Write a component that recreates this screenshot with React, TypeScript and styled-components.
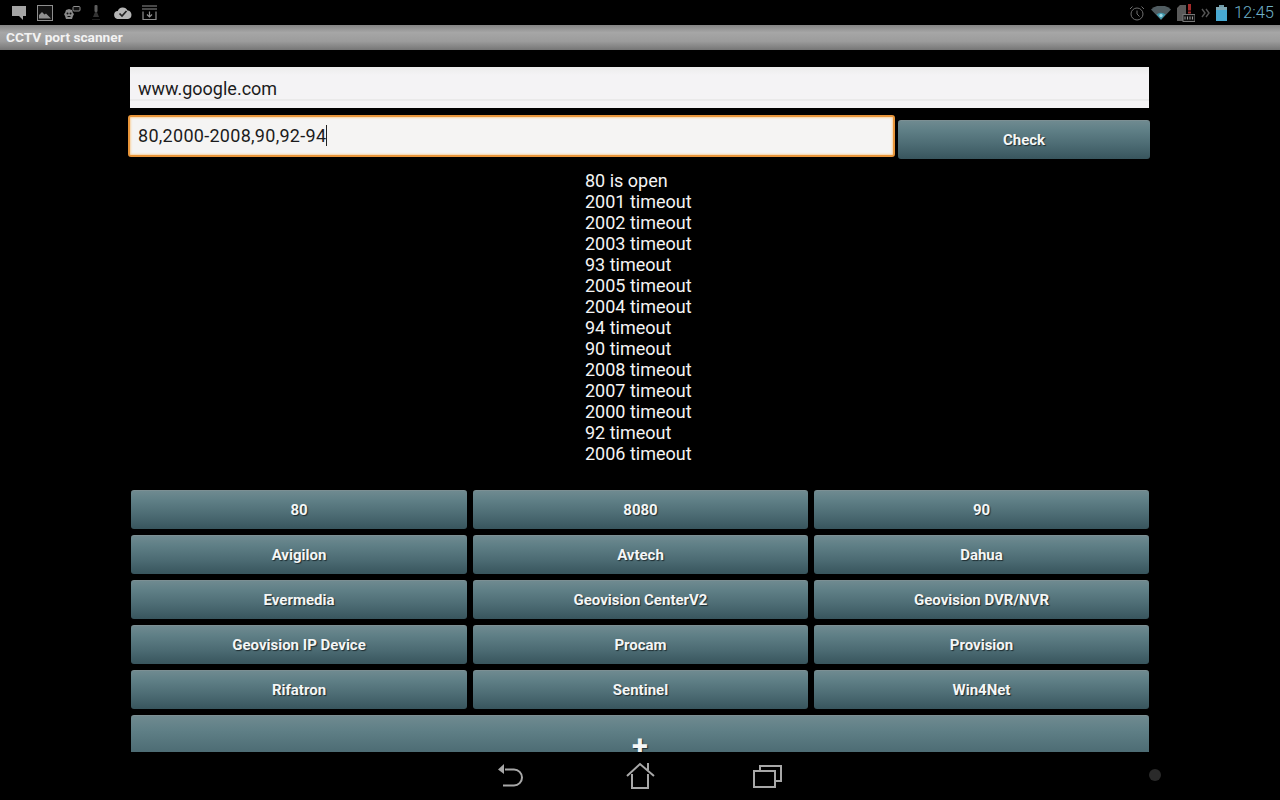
import React from "react";
import styled, { createGlobalStyle } from "styled-components";

const Global = createGlobalStyle`
  html, body { margin: 0; padding: 0; background: #000; }
  #root { width: 1280px; height: 800px; overflow: hidden; }
`;

const Screen = styled.div`
  width: 1280px;
  height: 800px;
  background: #000;
  display: flex;
  flex-direction: column;
  font-family: Roboto, "Liberation Sans", sans-serif;
  overflow: hidden;
`;

const StatusBar = styled.div`
  height: 25px;
  flex: none;
  display: flex;
  align-items: center;
  justify-content: space-between;
  padding: 0 6px 0 12px;
`;

const IconGroup = styled.div<{ $gap: number }>`
  display: flex;
  align-items: center;
  gap: ${(p) => p.$gap}px;
`;

const Clock = styled.span`
  font-size: 16.5px;
  font-weight: 300;
  color: #6fb0c8;
  margin-left: 1px;
`;

const TitleBar = styled.div`
  height: 25px;
  flex: none;
  background: linear-gradient(#858585, #a6a6a6 30%, #9c9c9c 65%, #767676);
  color: #f2f2f2;
  font-size: 13.7px;
  font-weight: 700;
  line-height: 25px;
  padding-left: 6px;
`;

const Content = styled.div`
  flex: 1;
  min-height: 0;
  overflow: hidden;
  padding: 17px 130px 0 130px;
  display: flex;
  flex-direction: column;
`;

const Field = styled.div`
  height: 41px;
  flex: none;
  box-sizing: border-box;
  background: linear-gradient(#ececec, #f4f3f5 20%, #f4f3f5 78%, #e4e4e4 80%, #f4f3f5 84%);
  color: #1c1c1c;
  font-size: 18px;
  line-height: 44px;
  padding-left: 8px;
  width: 1019px;
`;

const CheckRow = styled.div`
  display: flex;
  margin-top: 7px;
  margin-left: -2px;
  align-items: flex-start;
`;

const FocusField = styled.div`
  width: 767px;
  height: 42px;
  flex: none;
  box-sizing: border-box;
  background: #f5f4f3;
  border: 2px solid #e8953a;
  border-radius: 3px;
  box-shadow: inset 0 0 2px 1px #f8d4a5;
  color: #1c1c1c;
  font-size: 18px;
  letter-spacing: 0.28px;
  padding: 0 0 1px 8px;
  display: flex;
  align-items: center;
`;

const Caret = styled.span`
  width: 1px;
  height: 21px;
  background: #222;
`;

const Button = styled.div`
  box-sizing: border-box;
  height: 39px;
  flex: none;
  border-radius: 3px;
  background: linear-gradient(#6f8a90, #5f7f86 25%, #4b6a72 65%, #38555d);
  border-top: 1px solid #7c8f93;
  color: #f4f6f6;
  font-size: 15px;
  font-weight: 700;
  text-shadow: 1px 1px 1px #1e2c30;
  display: flex;
  align-items: center;
  justify-content: center;
`;

const CheckButton = styled(Button)`
  width: 252px;
  margin: 5px 0 0 3px;
`;

const Results = styled.div`
  margin: 11px 0 0 455px;
  color: #f4f4f4;
  font-size: 18px;
  line-height: 21px;
  height: 320px;
  flex: none;
`;

const Grid = styled.div`
  display: grid;
  grid-template-columns: 336px 335px 335px;
  gap: 6px;
  margin-left: 1px;
  width: 1018px;
`;

const Wide = styled(Button)`
  grid-column: 1 / -1;
  height: 60px;
  align-items: flex-start;
  font-size: 29px;
  line-height: 34px;
  padding-top: 13px;
`;

const NavBar = styled.div`
  height: 48px;
  flex: none;
  background: #000;
  position: relative;
  display: flex;
  align-items: center;
  justify-content: center;
  gap: 98px;
`;

const Dot = styled.span`
  position: absolute;
  left: 1149px;
  top: 17px;
  width: 12px;
  height: 12px;
  border-radius: 50%;
  background: #2a2a2a;
`;

const results = ["80 is open", "2001 timeout", "2002 timeout", "2003 timeout", "93 timeout", "2005 timeout", "2004 timeout", "94 timeout", "90 timeout", "2008 timeout", "2007 timeout", "2000 timeout", "92 timeout", "2006 timeout"];
const buttons = ["80", "8080", "90", "Avigilon", "Avtech", "Dahua", "Evermedia", "Geovision CenterV2", "Geovision DVR/NVR", "Geovision IP Device", "Procam", "Provision", "Rifatron", "Sentinel", "Win4Net"];

export default function App() {
  return (
    <Screen>
      <Global />
      <StatusBar>
        <IconGroup $gap={10}>
          <svg width="15" height="16" viewBox="0 0 15 16"><path d="M0 1h14v10h-3v4l-4-4H0z" fill="#a4a4a4" /></svg>
          <svg width="16" height="16" viewBox="0 0 16 16"><rect x=".5" y=".5" width="15" height="15" fill="#111" stroke="#8f8f8f" /><path d="M2 13.500V10l3-3 2.500 2.500L9 8.500l2 2 3 3z" fill="#8f8f8f" /></svg>
          <svg width="18" height="15" viewBox="0 0 18 15"><path d="M1 9l1-1 1-3 3-1 3 1 1 3 1 1-1 2-1 3H3l-1-3z" fill="#8a8a8a" /><circle cx="4.500" cy="8.500" r="1" fill="#111" /><circle cx="7.500" cy="8.500" r="1" fill="#111" /><path d="M4.500 11.500h3" stroke="#111" /><rect x="10" y="1.500" width="7" height="4.500" rx="1" fill="#111" stroke="#8f8f8f" /></svg>
          <svg width="13" height="16" viewBox="0 0 13 16"><rect x="3.500" y="0" width="3" height="7" rx="1" fill="#5e5e5e" /><path d="M2 12l2-5h2l2 5z" fill="#333" /><rect x="1" y="14" width="8" height="1" fill="#1e1e1e" /></svg>
          <svg width="18" height="13" viewBox="0 0 18 13"><path d="M4.500 13a4 4 0 0 1-.7-8A5.200 5.200 0 0 1 13.500 4.500 4.300 4.300 0 0 1 14 13z" fill="#b5b5b5" /><path d="M5.500 7.500L8 10l4.500-5" fill="none" stroke="#222" strokeWidth="1.700" /></svg>
          <svg width="15" height="15" viewBox="0 0 15 15" fill="none" stroke="#8f8f8f" strokeWidth="1.200"><path d="M0 1h15M0 4h15M1 6.500v8h13v-8" /><path d="M7.500 6.500v5M5 9.500l2.500 2.500L10 9.500" /></svg>
        </IconGroup>
        <IconGroup $gap={6}>
          <svg width="16" height="16" viewBox="0 0 16 16" fill="none" stroke="#6e6e6e"><circle cx="8" cy="9" r="6" /><path d="M8 5.500V9l2.500 2.500M1 4l2.500-2.500M15 4l-2.500-2.500" /></svg>
          <svg width="20" height="14" viewBox="0 0 20 14"><path d="M0 3.500a14.500 14.500 0 0 1 20 0L10 14z" fill="#505c61" /><path d="M5.500 8.500a6.500 6.500 0 0 1 9 0L10 13.500z" fill="#3f98ad" /><circle cx="10" cy="9.500" r="1.700" fill="#9fd5e0" /></svg>
          <svg width="18" height="18" viewBox="0 0 18 18"><path d="M0 4l3-3h6v12H6v4H0z" fill="#5a5a5a" /><rect x="6" y="10.500" width="12" height="7" fill="#111" stroke="#777" /><path d="M8 12.500v3M10.500 12.500v3M13 12.500v3M15.500 12.500v3" stroke="#999" /><rect x="11" y="0" width="3" height="6.500" fill="#a52a2a" /><rect x="11" y="7.500" width="3" height="2" fill="#a52a2a" /></svg>
          <svg width="9" height="10" viewBox="0 0 9 10" fill="none" stroke="#555" strokeWidth="1.400"><path d="M1 1l3 4-3 4M5 1l3 4-3 4" /></svg>
          <svg width="11" height="16" viewBox="0 0 11 16"><rect x="3" y="0" width="5" height="2" fill="#6f9aa8" /><rect x="0" y="2" width="11" height="3" fill="#7fa8b5" /><rect x="0" y="5" width="11" height="11" fill="#47a9d3" /></svg>
          <Clock>12:45</Clock>
        </IconGroup>
      </StatusBar>
      <TitleBar>CCTV port scanner</TitleBar>
      <Content>
        <Field>www.google.com</Field>
        <CheckRow>
          <FocusField>80,2000-2008,90,92-94<Caret /></FocusField>
          <CheckButton>Check</CheckButton>
        </CheckRow>
        <Results>
          {results.map((r) => <div key={r}>{r}</div>)}
        </Results>
        <Grid>
          {buttons.map((b) => <Button key={b}>{b}</Button>)}
          <Wide>+</Wide>
        </Grid>
      </Content>
      <NavBar>
        <svg width="30" height="26" viewBox="0 0 30 26" fill="none" stroke="#a8a8a8" strokeWidth="2"><path d="M8 6.500h9a7.500 7.500 0 0 1 0 16H6" /><path d="M7 1L1 6.500 7 11z" fill="#a8a8a8" stroke="none" /></svg>
        <svg width="30" height="28" viewBox="0 0 30 28" fill="none" stroke="#a8a8a8" strokeWidth="2"><path d="M2 14L15 2l14 12" /><path d="M7 12v14h16V12" /><path d="M23 1v7" /></svg>
        <svg width="30" height="24" viewBox="0 0 30 24" fill="none" stroke="#a8a8a8" strokeWidth="2"><rect x="1" y="7" width="21" height="16" /><path d="M7 7V2h21v15h-6" /></svg>
        <Dot />
      </NavBar>
    </Screen>
  );
}
